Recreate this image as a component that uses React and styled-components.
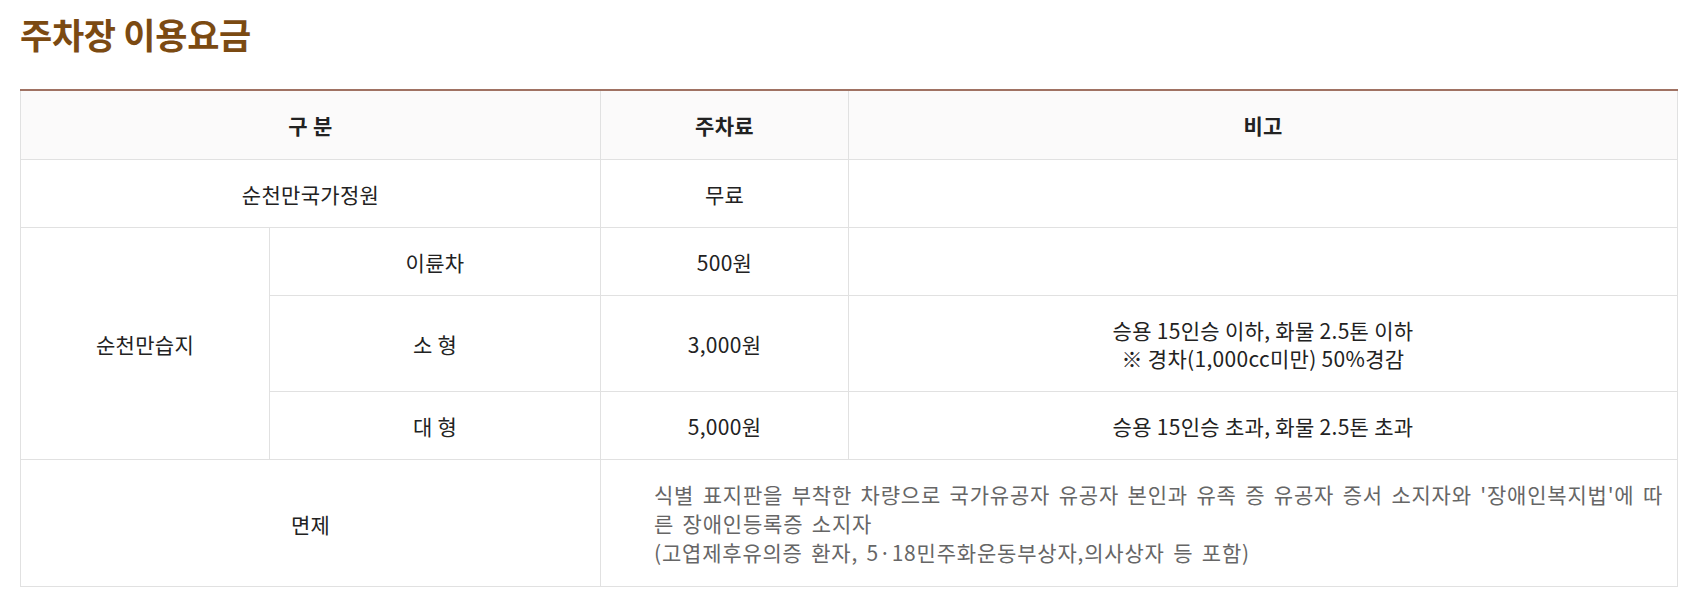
import React from 'react';
import styled, { createGlobalStyle } from 'styled-components';

const GlobalStyle = createGlobalStyle`
  html, body {
    margin: 0;
    padding: 0;
    background: #fff;
  }
  body {
    font-family: "Noto Sans CJK KR", "Noto Sans", sans-serif;
    color: #222;
  }
`;

const Page = styled.div`
  padding: 8px 24px 0 20px;
`;

const Title = styled.h2`
  margin: 0 0 29px 0;
  font-size: 35px;
  line-height: 52px;
  font-weight: 700;
  color: #7b4a12;
  letter-spacing: -0.3px;
`;

const FeeTable = styled.table`
  width: 100%;
  border-collapse: collapse;
  table-layout: fixed;
  border-top: 2px solid #a07263;
  font-size: 21px;
  line-height: 28px;
  letter-spacing: 0.3px;
`;

const Th = styled.th`
  background: #fbfafa;
  border: 1px solid #e1e1e1;
  border-top: none;
  padding: 20px 10px;
  font-weight: 700;
  color: #222;
  text-align: center;
`;

const Td = styled.td`
  border: 1px solid #e1e1e1;
  padding: 20px 10px 19px;
  text-align: ${p => (p.$left ? 'left' : 'center')};
  color: #222;
`;

const Note = styled.div`
  padding: 0 0 0 43px;
  color: #666;
  line-height: 29px;
  letter-spacing: 0.8px;
  word-spacing: 3px;
`;

export default function App() {
  return (
    <Page>
      <GlobalStyle />
      <Title>주차장 이용요금</Title>
      <FeeTable>
        <colgroup>
          <col style={{ width: 249 }} />
          <col style={{ width: 331 }} />
          <col style={{ width: 248 }} />
          <col />
        </colgroup>
        <thead>
          <tr>
            <Th colSpan={2}>구 분</Th>
            <Th>주차료</Th>
            <Th>비고</Th>
          </tr>
        </thead>
        <tbody>
          <tr>
            <Td colSpan={2}>순천만국가정원</Td>
            <Td>무료</Td>
            <Td></Td>
          </tr>
          <tr>
            <Td rowSpan={3}>순천만습지</Td>
            <Td>이륜차</Td>
            <Td>500원</Td>
            <Td></Td>
          </tr>
          <tr>
            <Td>소 형</Td>
            <Td>3,000원</Td>
            <Td>
              승용 15인승 이하, 화물 2.5톤 이하
              <br />
              ※ 경차(1,000cc미만) 50%경감
            </Td>
          </tr>
          <tr>
            <Td>대 형</Td>
            <Td>5,000원</Td>
            <Td>승용 15인승 초과, 화물 2.5톤 초과</Td>
          </tr>
          <tr>
            <Td colSpan={2}>면제</Td>
            <Td colSpan={2} $left>
              <Note>
                식별 표지판을 부착한 차량으로 국가유공자 유공자 본인과 유족 증 유공자 증서 소지자와 '장애인복지법'에 따른 장애인등록증 소지자
                <br />
                (고엽제후유의증 환자, 5·18민주화운동부상자,의사상자 등 포함)
              </Note>
            </Td>
          </tr>
        </tbody>
      </FeeTable>
    </Page>
  );
}
